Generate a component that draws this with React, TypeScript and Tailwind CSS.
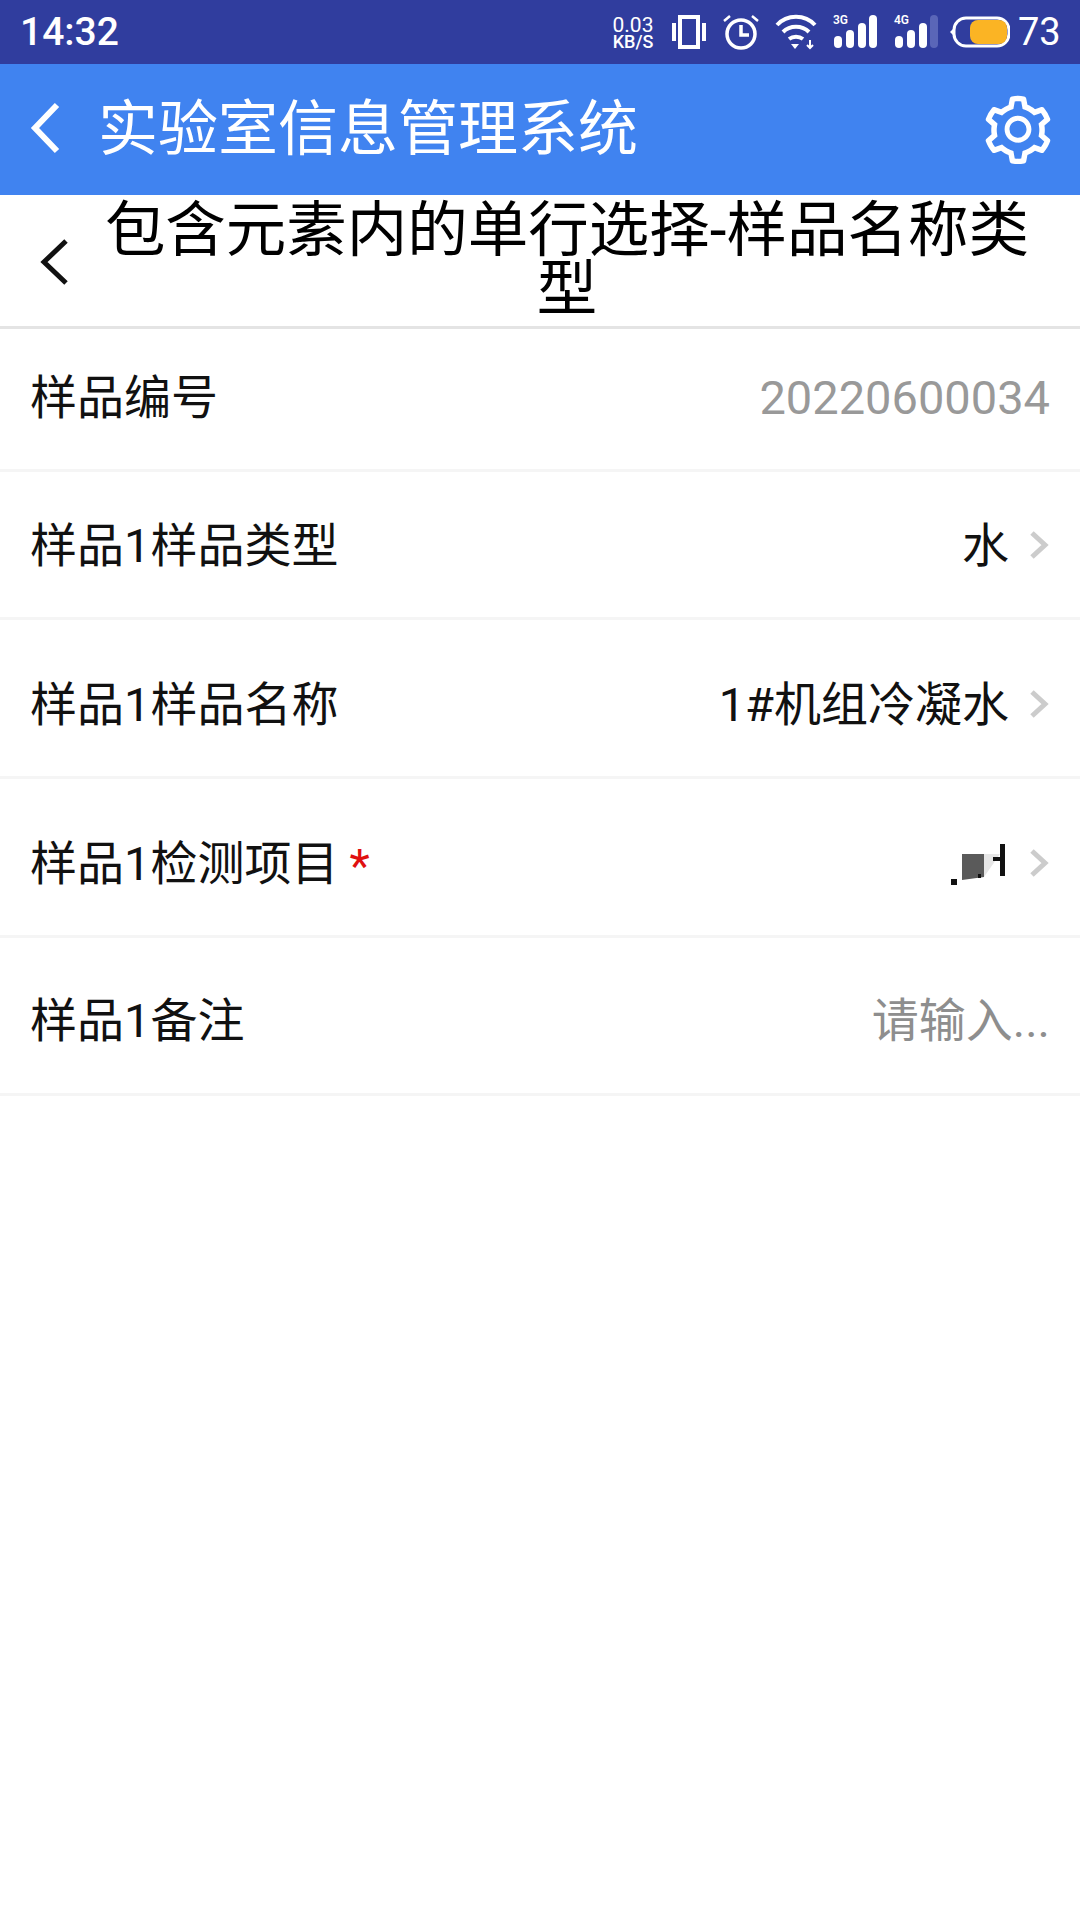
import { AiOutlineSetting } from "react-icons/ai";

const cjk = "font-['Roboto','Noto_Sans_CJK_SC',sans-serif]";

function Chevron() {
  return (
    <svg viewBox="0 0 20 28" className="w-[20px] h-[28px]" fill="none">
      <path d="M3 2l13 12L3 26" stroke="#cccccc" strokeWidth="5" />
    </svg>
  );
}

function Bars({ label, dim }: { label: string; dim?: boolean }) {
  return (
    <div className="relative w-[44px] h-[36px]">
      <span className="absolute left-0 top-0 text-[12px] leading-[12px] text-white font-semibold font-['Roboto',sans-serif]">
        {label}
      </span>
      <svg viewBox="0 0 44 36" className="w-[44px] h-[36px]">
        <rect x="1" y="22" width="8" height="12" rx="4" fill="#fff" />
        <rect x="13" y="16" width="8" height="18" rx="4" fill="#fff" />
        <rect x="25" y="9" width="8" height="25" rx="4" fill="#fff" />
        <rect x="36" y="1" width="8" height="33" rx="4" fill={dim ? "#5a66b8" : "#fff"} />
      </svg>
    </div>
  );
}

function StatusBar() {
  return (
    <div className="h-[64px] bg-[#303d9e] flex items-center justify-between pl-[20px] pr-[20px] text-white font-['Roboto',sans-serif]">
      <span className="text-[39px] font-medium leading-none">14:32</span>
      <div className="flex items-center">
        <div className="flex flex-col items-center w-[44px] mr-[17px]">
          <span className="text-[21px] leading-[18px]">0.03</span>
          <span className="text-[18px] leading-[15px] font-medium">KB/S</span>
        </div>
        <svg viewBox="0 0 34 34" className="w-[34px] h-[34px] mr-[16px]" fill="none" stroke="#fff">
          <rect x="8" y="2" width="18" height="30" strokeWidth="4" />
          <path d="M2 8v18M32 8v18" strokeWidth="4" />
        </svg>
        <svg viewBox="0 0 38 36" className="w-[38px] h-[36px] mr-[15px]" fill="none" stroke="#fff">
          <circle cx="19" cy="20" r="14" strokeWidth="3.5" />
          <path d="M19 11v10h8" strokeWidth="3.5" />
          <path d="M2 7l6-5M36 7l-6-5" strokeWidth="2.5" />
        </svg>
        <svg viewBox="0 0 42 36" className="w-[42px] h-[36px] mr-[16px]" fill="none" stroke="#fff">
          <path d="M2 11c10-11 28-11 38 0" strokeWidth="4" />
          <path d="M8 18c7-7 19-7 26 0" strokeWidth="4" />
          <path d="M14 25c4-3 10-3 14 0" strokeWidth="4" />
          <path d="M16 30h8l-4 5z" fill="#fff" stroke="none" />
          <path d="M35 26v8M32 31l3 3 3-3" strokeWidth="2" />
        </svg>
        <div className="mr-[17px]">
          <Bars label="3G" />
        </div>
        <div className="mr-[12px]">
          <Bars label="4G" dim />
        </div>
        <svg viewBox="0 0 60 32" className="w-[60px] h-[32px] mr-[8px]" fill="none">
          <path d="M0 16l4-4v8z" fill="#fff" />
          <rect x="4" y="2" width="55" height="28" rx="12" stroke="#fff" strokeWidth="3" />
          <rect x="20" y="4" width="37" height="24" rx="8" fill="#fbb424" />
        </svg>
        <span className="text-[38px] leading-none w-[42px]">73</span>
      </div>
    </div>
  );
}

function AppBar() {
  return (
    <div className="h-[131px] bg-[#4083f0] flex items-center justify-between pl-[30px] pr-[23px] text-white">
      <div className="flex items-center">
        <svg viewBox="0 0 30 52" className="w-[30px] h-[52px] mr-[38px] -mt-[4px]" fill="none">
          <path d="M27 3L5 26l22 23" stroke="#fff" strokeWidth="6" />
        </svg>
        <span className={`text-[60px] leading-none ${cjk}`}>实验室信息管理系统</span>
      </div>
      <AiOutlineSetting size={78} />
    </div>
  );
}

function SubHeader() {
  return (
    <div className="h-[134px] bg-white border-b-[3px] border-[#e4e4e4] flex items-center pl-[40px]">
      <svg viewBox="0 0 28 46" className="w-[28px] h-[46px] shrink-0 mt-[3px]" fill="none">
        <path d="M26 2L4 23l22 21" stroke="#111" strokeWidth="5" />
      </svg>
      <div className={`w-[930px] ml-[34px] text-center text-[60.5px] leading-[59px] text-black -mt-[2px] ${cjk}`}>
        包含元素内的单行选择-样品名称类型
      </div>
    </div>
  );
}

function Row({
  className,
  label,
  required,
  children,
}: {
  className: string;
  label: string;
  required?: boolean;
  children: React.ReactNode;
}) {
  return (
    <div className={`${className} border-b-[3px] border-[#f5f5f5] flex items-center justify-between pl-[30px] pr-[31px] ${cjk}`}>
      <div className="text-[47px] leading-none text-[#111] flex items-center">
        {label}
        {required && <span className="text-[#e01010] ml-[11px] mt-[5px]">*</span>}
      </div>
      {children}
    </div>
  );
}

export default function App() {
  return (
    <div className="w-[1080px] h-[1920px] bg-white overflow-hidden">
      <StatusBar />
      <AppBar />
      <SubHeader />
      <Row className="h-[143px] pb-[4px]" label="样品编号">
        <span className="text-[47px] leading-none text-[#999999] -mr-[1px]">20220600034</span>
      </Row>
      <Row className="h-[148px] pt-[1px]" label="样品1样品类型">
        <div className="flex items-center gap-[20px]">
          <span className="text-[47px] leading-none text-[#111]">水</span>
          <Chevron />
        </div>
      </Row>
      <Row className="h-[159px] pt-[12px]" label="样品1样品名称">
        <div className="flex items-center gap-[20px]">
          <span className="text-[47px] leading-none text-[#111]">1#机组冷凝水</span>
          <Chevron />
        </div>
      </Row>
      <Row className="h-[159px] pt-[12px]" label="样品1检测项目" required>
        <div className="flex items-center gap-[20px]">
          <svg viewBox="0 0 60 44" className="w-[60px] h-[44px]">
            <rect x="2" y="38" width="6" height="6" fill="#111" />
            <path d="M13 13h22v23l-22 3z" fill="#5a5a5a" />
            <path d="M35 13h16L35 36z" fill="#e6e6e6" />
            <rect x="29" y="33" width="3" height="4" fill="#111" />
            <path d="M44 18h8" stroke="#111" strokeWidth="4" />
            <rect x="51" y="3" width="5" height="32" fill="#111" />
          </svg>
          <Chevron />
        </div>
      </Row>
      <Row className="h-[158px] pt-[10px]" label="样品1备注">
        <span className="text-[47px] leading-none text-[#8e8e8e] -mr-[1px]">请输入...</span>
      </Row>
    </div>
  );
}
